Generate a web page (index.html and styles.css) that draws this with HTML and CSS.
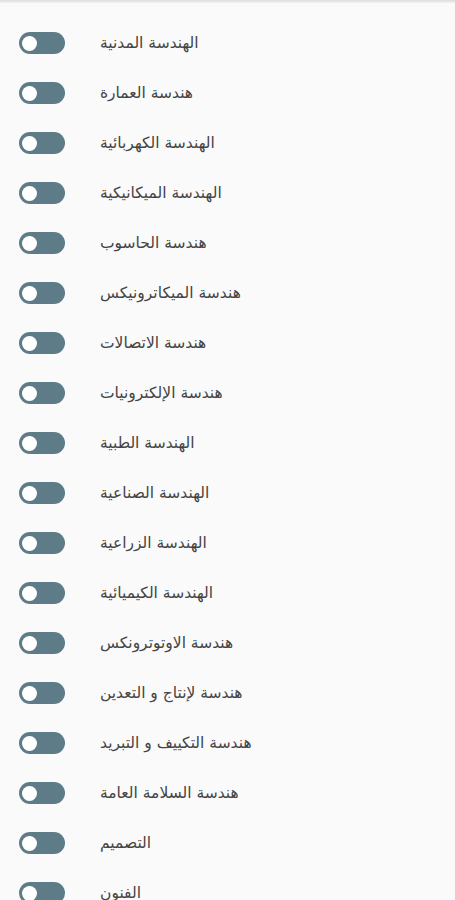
FILE: index.html
```html
<!DOCTYPE html>
<html lang="ar">
  <head>
    <meta charset="UTF-8" />
    <meta name="viewport" content="width=device-width, initial-scale=1.0" />
    <title>Departments</title>
    <link rel="stylesheet" href="styles.css">
  </head>
  <body>
    <div class="topbar"></div>
    <ul class="list">
      <li class="row"><span class="switch"><span class="thumb"></span></span><span class="label">الهندسة المدنية</span></li>
      <li class="row"><span class="switch"><span class="thumb"></span></span><span class="label">هندسة العمارة</span></li>
      <li class="row"><span class="switch"><span class="thumb"></span></span><span class="label">الهندسة الكهربائية</span></li>
      <li class="row"><span class="switch"><span class="thumb"></span></span><span class="label">الهندسة الميكانيكية</span></li>
      <li class="row"><span class="switch"><span class="thumb"></span></span><span class="label">هندسة الحاسوب</span></li>
      <li class="row"><span class="switch"><span class="thumb"></span></span><span class="label">هندسة الميكاترونيكس</span></li>
      <li class="row"><span class="switch"><span class="thumb"></span></span><span class="label">هندسة الاتصالات</span></li>
      <li class="row"><span class="switch"><span class="thumb"></span></span><span class="label">هندسة الإلكترونيات</span></li>
      <li class="row"><span class="switch"><span class="thumb"></span></span><span class="label">الهندسة الطبية</span></li>
      <li class="row"><span class="switch"><span class="thumb"></span></span><span class="label">الهندسة الصناعية</span></li>
      <li class="row"><span class="switch"><span class="thumb"></span></span><span class="label">الهندسة الزراعية</span></li>
      <li class="row"><span class="switch"><span class="thumb"></span></span><span class="label">الهندسة الكيميائية</span></li>
      <li class="row"><span class="switch"><span class="thumb"></span></span><span class="label">هندسة الاوتوترونكس</span></li>
      <li class="row"><span class="switch"><span class="thumb"></span></span><span class="label">هندسة لإنتاج و التعدين</span></li>
      <li class="row"><span class="switch"><span class="thumb"></span></span><span class="label">هندسة التكييف و التبريد</span></li>
      <li class="row"><span class="switch"><span class="thumb"></span></span><span class="label">هندسة السلامة العامة</span></li>
      <li class="row"><span class="switch"><span class="thumb"></span></span><span class="label">التصميم</span></li>
      <li class="row"><span class="switch"><span class="thumb"></span></span><span class="label">الفنون</span></li>
    </ul>
  </body>
</html>
```
FILE: styles.css
```css
html, body {
  height: 100%;
  overflow: hidden;
}
body {
  margin: 0;
  padding: 0;
  background-color: #fafafa;
  font-family: "DejaVu Sans", sans-serif;
}
.topbar {
  height: 3px;
  background: linear-gradient(to bottom, #dcdcdc, #f2f2f2);
}
.list {
  list-style: none;
  margin: 0;
  padding: 15px 0 0 0;
}
.row {
  display: flex;
  align-items: center;
  height: 50px;
  padding-left: 19px;
}
.switch {
  display: flex;
  align-items: center;
  box-sizing: border-box;
  width: 46px;
  height: 22px;
  padding: 0 3px;
  border-radius: 11px;
  background-color: #5e7b88;
}
.thumb {
  width: 15px;
  height: 15px;
  border-radius: 50%;
  background-color: #ffffff;
}
.label {
  margin-left: 35px;
  direction: rtl;
  font-size: 15.5px;
  color: #444444;
}
```
